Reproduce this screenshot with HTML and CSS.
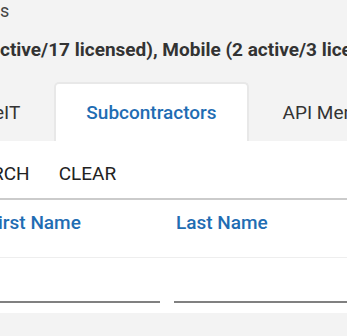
FILE: index.html
```html
<!DOCTYPE html>
<html>
<head>
<meta charset="utf-8">
<link rel="stylesheet" href="styles.css">
</head>
<body>
<div class="page">
  <div class="crumb">s</div>
  <div class="summary">ctive/17 licensed), Mobile (2 active/3 licensed)</div>
  <div class="tabs">
    <div class="tab tab-first">eIT</div>
    <div class="tab tab-active">Subcontractors</div>
    <div class="tab">API Members</div>
  </div>
  <div class="panel">
    <div class="actions">
      <span class="btn btn-search">RCH</span>
      <span class="btn">CLEAR</span>
    </div>
    <div class="table-head">
      <div class="col col-first">irst Name</div>
      <div class="col">Last Name</div>
    </div>
    <div class="filters">
      <div class="field field-first"></div>
      <div class="field-gap"></div>
      <div class="field"></div>
    </div>
  </div>
</div>
</body>
</html>
```

FILE: styles.css
```css
html, body {
  margin: 0;
  padding: 0;
  background: #f3f3f3;
}
body {
  width: 347px;
  height: 336px;
  overflow: hidden;
  font-family: Roboto, "Liberation Sans", sans-serif;
  color: #333;
}
.page {
  width: 347px;
  overflow: hidden;
}
.crumb {
  font-size: 18px;
  line-height: 22px;
  height: 22px;
  color: #444;
}
.summary {
  font-size: 19px;
  font-weight: 700;
  line-height: 22px;
  margin-top: 17px;
  white-space: nowrap;
  color: #333;
}
.tabs {
  display: flex;
  margin-top: 21px;
  margin-left: -38px;
  gap: 2px;
  white-space: nowrap;
}
.tab {
  height: 57px;
  padding: 0 30px;
  display: flex;
  align-items: center;
  font-size: 19px;
  color: #333;
  border: 2px solid transparent;
  border-bottom: 0;
}
.tab-active {
  background: #fff;
  border-color: #e8e8e8;
  border-radius: 5px 5px 0 0;
  color: #1f6db3;
  font-weight: 500;
}
.panel {
  background: #fff;
  height: 172px;
}
.actions {
  display: flex;
  gap: 29px;
  height: 57px;
  align-items: center;
  padding-top: 8px;
  box-sizing: border-box;
  margin-left: -8px;
}
.btn {
  font-size: 19px;
  color: #222;
}
.table-head {
  border-top: 2px solid #cbcbcb;
  border-bottom: 1px solid #eee;
  display: flex;
  height: 60px;
  padding-top: 12px;
  box-sizing: border-box;
  align-items: flex-start;
}
.col {
  font-size: 19px;
  line-height: 22px;
  font-weight: 500;
  color: #1f6db3;
}
.col-first {
  width: 178px;
  margin-left: -2px;
  flex: none;
}
.filters {
  display: flex;
  height: 55px;
  align-items: flex-end;
  padding-bottom: 10px;
  box-sizing: border-box;
}
.field {
  flex: 1;
  border-bottom: 2px solid #808080;
}
.field-first {
  flex: none;
  width: 160px;
}
.field-gap {
  width: 14px;
}
```
